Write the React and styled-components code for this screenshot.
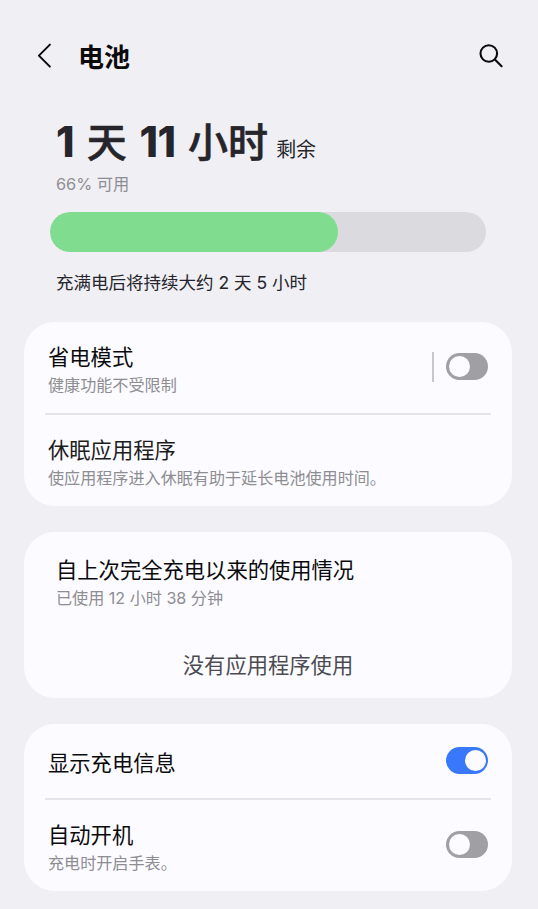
import { useState } from "react";
import styled, { createGlobalStyle } from "styled-components";

const BATTERY_LEVEL = 66;

export default function App() {
  const [ powerSaving, setPowerSaving ] = useState(false);
  const [ chargingInfo, setChargingInfo ] = useState(true);
  const [ autoPowerOn, setAutoPowerOn ] = useState(false);

  return (
    <>
      <GlobalStyle/>
      <Page>
        <Header>
          <IconButton aria-label="返回">
            <svg width="18" height="28" viewBox="0 0 18 28" fill="none" stroke="#0b0b0d" strokeWidth="2" strokeLinecap="round" strokeLinejoin="round">
              <path d="M14.9 2.6 L3.9 13.6 L14.9 24.6"/>
            </svg>
          </IconButton>
          <PageTitle>电池</PageTitle>
          <IconButton aria-label="搜索">
            <svg width="26" height="26" viewBox="0 0 26 26" fill="none" stroke="#0b0b0d" strokeWidth="2.1" strokeLinecap="round">
              <circle cx="10.8" cy="10.5" r="8.3"/>
              <path d="M16.9 16.6 L23.6 23.2"/>
            </svg>
          </IconButton>
        </Header>

        <Summary>
          <Remaining><Digits>1</Digits> 天 <Digits>11</Digits> 小时<RemainingLabel>剩余</RemainingLabel></Remaining>
          <Available>{BATTERY_LEVEL}% 可用</Available>
          <Bar>
            <BarFill style={{ width: `${BATTERY_LEVEL}%` }}/>
          </Bar>
          <Estimate>充满电后将持续大约 2 天 5 小时</Estimate>
        </Summary>

        <Cards>
          <Card>
            <Row $height={91}>
              <RowText>
                <RowTitle>省电模式</RowTitle>
                <RowSub>健康功能不受限制</RowSub>
              </RowText>
              <Separator/>
              <Toggle on={powerSaving} onChange={setPowerSaving}/>
            </Row>
            <Divider/>
            <Row $height={91}>
              <RowText>
                <RowTitle $soft>休眠应用程序</RowTitle>
                <RowSub>使应用程序进入休眠有助于延长电池使用时间。</RowSub>
              </RowText>
            </Row>
          </Card>

          <Card>
            <Usage>
              <RowTitle>自上次完全充电以来的使用情况</RowTitle>
              <RowSub>已使用 12 小时 38 分钟</RowSub>
              <Empty>没有应用程序使用</Empty>
            </Usage>
          </Card>

          <Card>
            <Row $height={74}>
              <RowText>
                <RowTitle>显示充电信息</RowTitle>
              </RowText>
              <Toggle on={chargingInfo} onChange={setChargingInfo}/>
            </Row>
            <Divider/>
            <Row $height={91}>
              <RowText>
                <RowTitle>自动开机</RowTitle>
                <RowSub>充电时开启手表。</RowSub>
              </RowText>
              <Toggle on={autoPowerOn} onChange={setAutoPowerOn}/>
            </Row>
          </Card>
        </Cards>
      </Page>
    </>
  )
};

function Toggle({ on, onChange }) {
  return (
    <Track role="switch" aria-checked={on} $on={on} onClick={() => onChange(!on)}>
      <Knob/>
    </Track>
  )
}

const GlobalStyle = createGlobalStyle`
  * {
    box-sizing: border-box;
  }
  body {
    margin: 0;
    background-color: #f0eff4;
    font-family: Inter, "Noto Sans CJK SC", sans-serif;
  }
`

const Page = styled.main`
  width: 538px;
  height: 909px;
  overflow: hidden;
  color: #0b0b0d;
`

const Header = styled.header`
  display: flex;
  align-items: center;
  height: 112px;
  padding: 0 34px 0 35px;
`

const IconButton = styled.button`
  all: unset;
  display: flex;
  cursor: pointer;
`

const PageTitle = styled.h1`
  flex: 1;
  margin: 4px 0 0 25px;
  font-size: 26px;
  line-height: 36px;
  font-weight: 700;
`

const Summary = styled.section`
  padding: 0 52px 0 50px;
`

const Remaining = styled.div`
  height: 60px;
  padding-left: 6px;
  font-size: 40px;
  line-height: 60px;
  font-weight: 500;
  word-spacing: 2px;
  color: #25252b;
  white-space: nowrap;
  -webkit-text-stroke: 0.6px #25252b;
`

const Digits = styled.span`
  font-size: 42px;
  font-weight: 800;
  letter-spacing: -0.5px;
  -webkit-text-stroke: 0;
`

const RemainingLabel = styled.span`
  margin-left: 8px;
  font-size: 20px;
  font-weight: 400;
  -webkit-text-stroke: 0;
`

const Available = styled.div`
  padding-left: 6px;
  font-size: 16.3px;
  line-height: 25px;
  color: #8d8d92;
`

const Bar = styled.div`
  height: 40px;
  margin-top: 15px;
  border-radius: 20px;
  background-color: #dbdadf;
  overflow: hidden;
`

const BarFill = styled.div`
  height: 100%;
  border-radius: 20px;
  background-color: #80dd90;
`

const Estimate = styled.div`
  margin-top: 18px;
  padding-left: 6px;
  font-size: 17.5px;
  line-height: 26px;
  color: #25252b;
`

const Cards = styled.div`
  display: flex;
  flex-direction: column;
  gap: 26px;
  margin-top: 26px;
  padding: 0 26px 0 24px;
`

const Card = styled.section`
  border-radius: 31px;
  background-color: #fcfbff;
`

const Row = styled.div`
  display: flex;
  align-items: center;
  height: ${({ $height }) => $height}px;
  padding: 0 24px;
`

const RowText = styled.div`
  flex: 1;
  padding-top: 3px;
`

const RowTitle = styled.div`
  font-size: 21.3px;
  line-height: 32px;
  color: ${({ $soft }) => ($soft ? "#1d1d21" : "#0b0b0d")};
`

const RowSub = styled.div`
  font-size: 16.1px;
  line-height: 25px;
  color: #8d8d92;
`

const Divider = styled.hr`
  height: 2px;
  margin: 0 21px;
  border: none;
  background-color: #e5e4e9;
`

const Separator = styled.span`
  width: 2px;
  height: 30px;
  margin: 0 12px 2px 0;
  background-color: #c8c7cc;
`

const Track = styled.button`
  all: unset;
  box-sizing: border-box;
  display: flex;
  justify-content: ${({ $on }) => ($on ? "flex-end" : "flex-start")};
  width: 42px;
  height: 27px;
  margin-bottom: 2px;
  padding: 3px 2.5px;
  border-radius: 14px;
  background-color: ${({ $on }) => ($on ? "#3a78fb" : "#a09fa4")};
  cursor: pointer;
`

const Knob = styled.span`
  width: 21px;
  height: 21px;
  border-radius: 50%;
  background-color: #fcfbff;
`

const Usage = styled.div`
  height: 166px;
  padding: 22px 32px 0;
`

const Empty = styled.div`
  margin-top: 38px;
  font-size: 21.3px;
  line-height: 32px;
  text-align: center;
  color: #4c4c50;
`
